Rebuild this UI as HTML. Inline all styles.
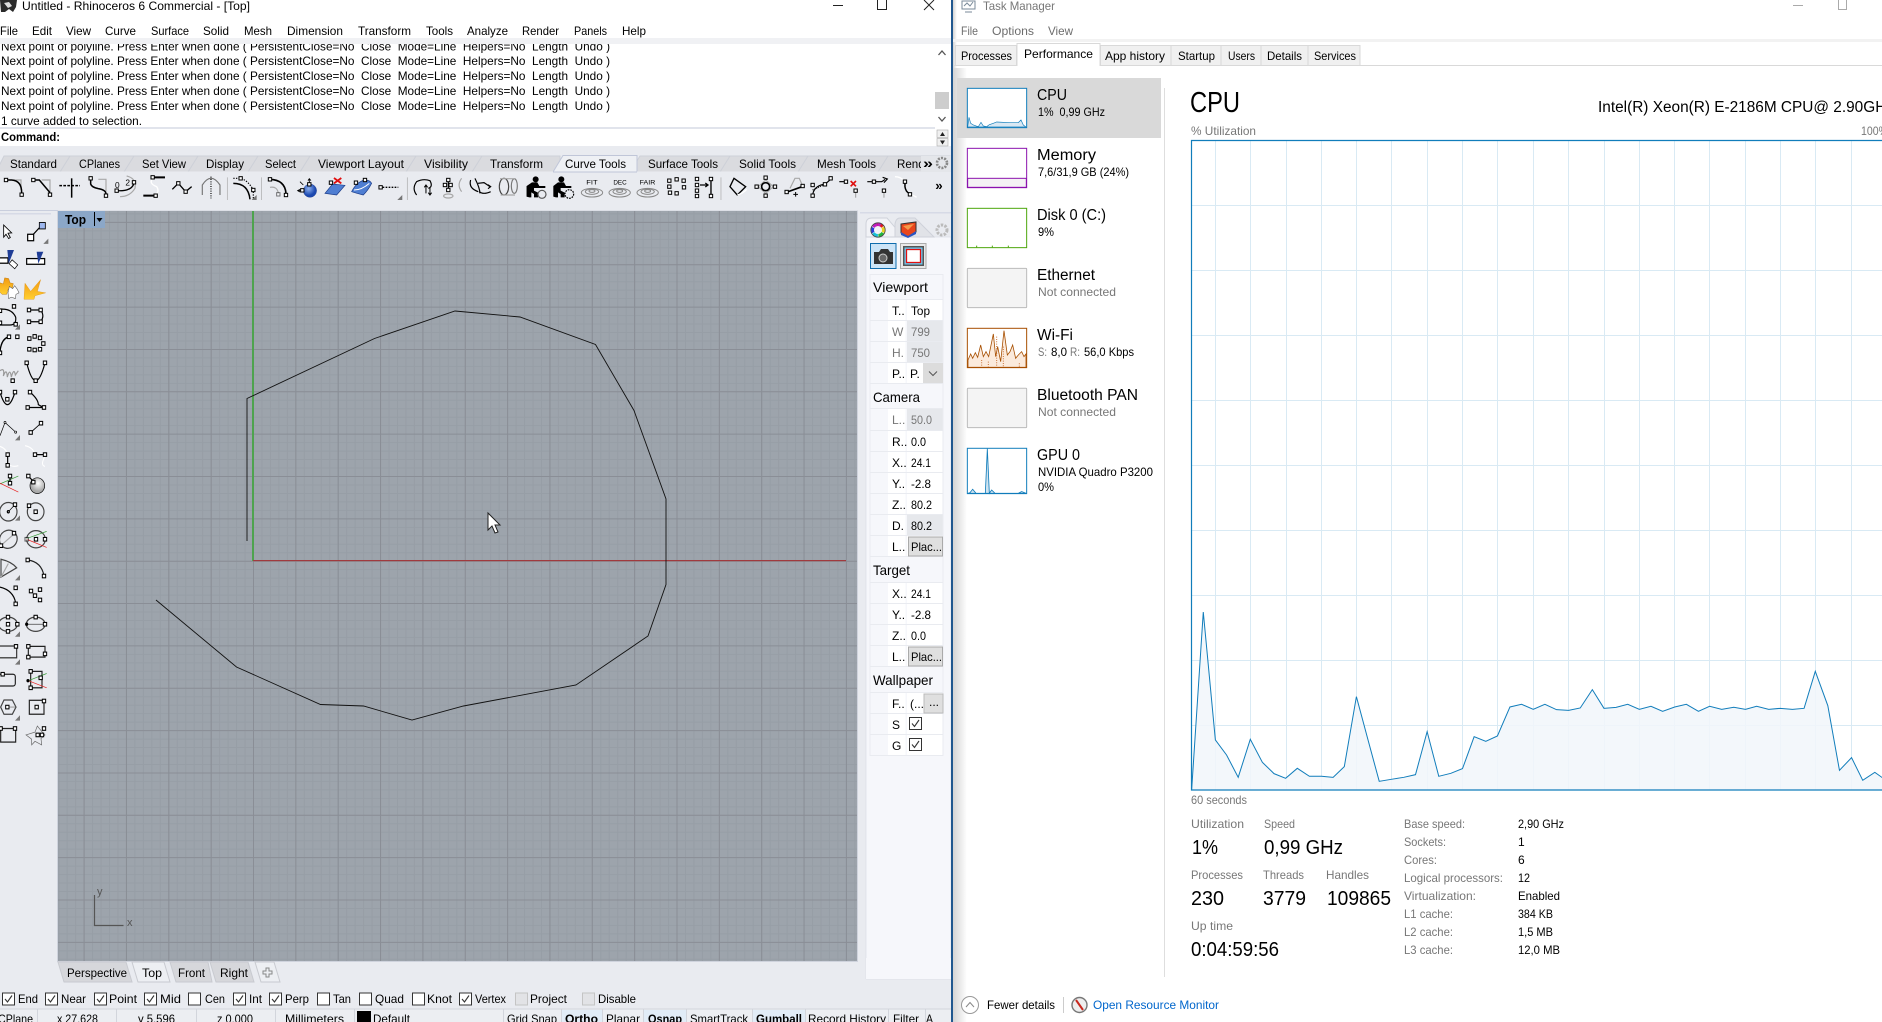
<!DOCTYPE html>
<html lang="en"><head><meta charset="utf-8"><title>Rhinoceros and Task Manager</title>
<style>
html,body{margin:0;padding:0;width:1882px;height:1022px;overflow:hidden;background:#fff}
svg{display:block}
text{font-family:"Liberation Sans",sans-serif;font-size:12px;fill:#000;white-space:pre}
.g{fill:#6d6d6d}.b{font-weight:bold}.l{fill:#777}
.ic{fill:none;stroke:#000;stroke-width:3.5}
.gr{stroke:#a8a8a8}
</style></head><body>
<svg width="1882" height="1022" viewBox="0 0 1882 1022" xmlns="http://www.w3.org/2000/svg">
<defs>
<rect id="h" x="-5" y="-5" width="10" height="10" fill="#fff" stroke="#000" stroke-width="3"/>
<path id="tri" d="M0 15L15 0V15Z" fill="#777" stroke="none"/>
<g id="c"><rect x=".5" y=".5" width="12" height="12" fill="#fff" stroke="#333"/><path d="M3 6.5L5.5 9.5L10 3" fill="none" stroke="#333" stroke-width="1.1"/></g>
<rect id="e" x=".5" y=".5" width="12" height="12" fill="#fff" stroke="#333"/>
<rect id="d" x=".5" y=".5" width="12" height="12" fill="#e2e3e6" stroke="#c4c4c4"/>
<radialGradient id="sph" cx=".4" cy=".35"><stop offset="0" stop-color="#8fb2f0"/><stop offset="1" stop-color="#1c49b0"/></radialGradient>
<radialGradient id="gs" cx=".55" cy=".35"><stop offset="0" stop-color="#fff"/><stop offset="1" stop-color="#aaa"/></radialGradient>
<linearGradient id="or" x1="0" y1="0" x2="0" y2="1"><stop offset="0" stop-color="#f29a12"/><stop offset="1" stop-color="#ffcf30"/></linearGradient>
<linearGradient id="sh" x1="0" x2="1"><stop offset="0" stop-color="#d4d4d4"/><stop offset="1" stop-color="#fff"/></linearGradient>
</defs>

<!-- RHINO WINDOW -->
<rect x="0" y="0" width="952" height="1022" fill="#e9ebf0"/>
<rect x="0" y="0" width="951" height="38" fill="#fff"/>
<path d="M0 0H17L16 7L13 12L9 9L5 12L1 12Z" fill="#2a2a2a"/><path d="M4 3L9 2L12 6L8 8Z" fill="#ddd"/>
<text x="22" y="10" textLength="228" lengthAdjust="spacingAndGlyphs">Untitled - Rhinoceros 6 Commercial - [Top]</text>
<path d="M833 5.5H843M877.5 -1H886.5V9.5H877.5ZM924 0L934 10M934 0L924 10" fill="none" stroke="#222"/>
<g>
<text x="0" y="35" textLength="18" lengthAdjust="spacingAndGlyphs">File</text>
<text x="32" y="35" textLength="20" lengthAdjust="spacingAndGlyphs">Edit</text>
<text x="66" y="35" textLength="25" lengthAdjust="spacingAndGlyphs">View</text>
<text x="105" y="35" textLength="31" lengthAdjust="spacingAndGlyphs">Curve</text>
<text x="151" y="35" textLength="38" lengthAdjust="spacingAndGlyphs">Surface</text>
<text x="203" y="35" textLength="26" lengthAdjust="spacingAndGlyphs">Solid</text>
<text x="244" y="35" textLength="28" lengthAdjust="spacingAndGlyphs">Mesh</text>
<text x="287" y="35" textLength="56" lengthAdjust="spacingAndGlyphs">Dimension</text>
<text x="358" y="35" textLength="53" lengthAdjust="spacingAndGlyphs">Transform</text>
<text x="426" y="35" textLength="27" lengthAdjust="spacingAndGlyphs">Tools</text>
<text x="467" y="35" textLength="41" lengthAdjust="spacingAndGlyphs">Analyze</text>
<text x="522" y="35" textLength="37" lengthAdjust="spacingAndGlyphs">Render</text>
<text x="574" y="35" textLength="33" lengthAdjust="spacingAndGlyphs">Panels</text>
<text x="622" y="35" textLength="24" lengthAdjust="spacingAndGlyphs">Help</text>
</g>
<!-- command history -->
<rect x="0" y="44" width="951" height="84" fill="#fff"/>
<text x="1" y="50.5" textLength="609" lengthAdjust="spacingAndGlyphs">Next point of polyline. Press Enter when done ( PersistentClose=No  Close  Mode=Line  Helpers=No  Length  Undo )</text>
<text x="1" y="65" textLength="609" lengthAdjust="spacingAndGlyphs">Next point of polyline. Press Enter when done ( PersistentClose=No  Close  Mode=Line  Helpers=No  Length  Undo )</text>
<text x="1" y="80" textLength="609" lengthAdjust="spacingAndGlyphs">Next point of polyline. Press Enter when done ( PersistentClose=No  Close  Mode=Line  Helpers=No  Length  Undo )</text>
<text x="1" y="95" textLength="609" lengthAdjust="spacingAndGlyphs">Next point of polyline. Press Enter when done ( PersistentClose=No  Close  Mode=Line  Helpers=No  Length  Undo )</text>
<text x="1" y="110" textLength="609" lengthAdjust="spacingAndGlyphs">Next point of polyline. Press Enter when done ( PersistentClose=No  Close  Mode=Line  Helpers=No  Length  Undo )</text>
<text x="1" y="125" textLength="141" lengthAdjust="spacingAndGlyphs">1 curve added to selection.</text>
<rect x="0" y="38" width="951" height="6" fill="#f0f1f4"/>
<rect x="935" y="44" width="15" height="84" fill="#fff"/>
<rect x="935" y="92" width="14" height="17" fill="#cdcdcd"/>
<path d="M938.5 55L942 51L945.5 55M938.5 117L942 121L945.5 117" fill="none" stroke="#555" stroke-width="1.3"/>
<rect x="0" y="128" width="951" height="18" fill="#fff"/>
<rect x="0" y="127.5" width="935" height="1" fill="#c3c8da"/>
<text x="1" y="141" class="b" textLength="59" lengthAdjust="spacingAndGlyphs">Command:</text>
<rect x="937" y="130" width="11" height="7.5" fill="#f0f0f0" stroke="#aaa" stroke-width=".6"/><rect x="937" y="138.5" width="11" height="7.5" fill="#f0f0f0" stroke="#aaa" stroke-width=".6"/>
<path d="M940 136L942.5 132L945 136ZM940 140.5L942.5 144.5L945 140.5Z" fill="#222"/>
<!-- toolbar tabs -->
<g fill="#dadbdf" stroke="#cdd0d8">
<polygon points="-4,172 4,156 72,156 72,172"/>
<polygon points="60,172 70,156 136,156 136,172"/>
<polygon points="124,172 134,156 200,156 200,172"/>
<polygon points="188,172 198,156 260,156 260,172"/>
<polygon points="248,172 258,156 313,156 313,172"/>
<polygon points="300,172 310,156 420,156 420,172"/>
<polygon points="406,172 416,156 482,156 482,172"/>
<polygon points="472,172 482,156 560,156 560,172"/>
<polygon points="630,172 640,156 732,156 732,172"/>
<polygon points="720,172 730,156 812,156 812,172"/>
<polygon points="798,172 808,156 892,156 892,172"/>
<polygon points="878,172 888,156 950,156 950,172"/>
<polygon points="553,172 563,155.5 637,155.5 637,172" fill="#eef0f4" stroke="#c0c6d8"/>
</g>
<rect x="0" y="171.5" width="553" height="1.5" fill="#e9ebf0"/><rect x="637" y="171.5" width="314" height="1.5" fill="#e9ebf0"/>
<g>
<text x="10" y="168" textLength="47" lengthAdjust="spacingAndGlyphs">Standard</text>
<text x="79" y="168" textLength="41" lengthAdjust="spacingAndGlyphs">CPlanes</text>
<text x="142" y="168" textLength="44" lengthAdjust="spacingAndGlyphs">Set View</text>
<text x="206" y="168" textLength="38" lengthAdjust="spacingAndGlyphs">Display</text>
<text x="265" y="168" textLength="31" lengthAdjust="spacingAndGlyphs">Select</text>
<text x="318" y="168" textLength="86" lengthAdjust="spacingAndGlyphs">Viewport Layout</text>
<text x="424" y="168" textLength="44" lengthAdjust="spacingAndGlyphs">Visibility</text>
<text x="490" y="168" textLength="53" lengthAdjust="spacingAndGlyphs">Transform</text>
<text x="565" y="168" textLength="61" lengthAdjust="spacingAndGlyphs">Curve Tools</text>
<text x="648" y="168" textLength="70" lengthAdjust="spacingAndGlyphs">Surface Tools</text>
<text x="739" y="168" textLength="57" lengthAdjust="spacingAndGlyphs">Solid Tools</text>
<text x="817" y="168" textLength="59" lengthAdjust="spacingAndGlyphs">Mesh Tools</text>
<text x="897" y="168" textLength="38" lengthAdjust="spacingAndGlyphs">Render</text>
</g>
<rect x="921" y="156" width="30" height="16" fill="#e4e6ea"/>
<text x="923" y="168" class="b" style="font-size:14px" textLength="10" lengthAdjust="spacingAndGlyphs">»</text>
<circle cx="942" cy="163" r="5" fill="none" stroke="#888" stroke-width="2.6" stroke-dasharray="2 1.2"/>

<!-- toolbar icons, first half -->
<g transform="translate(0,150) scale(.3333)" class="ic">
<path class="gr" d="M40 90H63V120"/>
<path d="M18 90H35Q65 92 65 128" stroke-width="4.5"/><use href="#h" x="18" y="90"/><use href="#h" x="65" y="134"/>
<path class="gr" d="M125 90H150V125"/>
<path d="M100 90H118L150 128" stroke-width="4.5"/><use href="#h" x="100" y="90"/><use href="#h" x="150" y="134"/>
<path d="M178 107H240" stroke-dasharray="8 4" stroke-width="4.5"/><path d="M215 85V143" stroke-width="4.5"/>
<path class="gr" d="M295 88H318V125"/>
<path d="M272 88V102Q275 112 295 116Q318 120 318 132" stroke-width="4.5"/><use href="#h" x="272" y="85"/><use href="#h" x="318" y="137"/>
<path class="gr" d="M380 78Q410 85 405 115Q390 140 360 140"/>
<path d="M350 122Q395 125 402 100" stroke-width="4"/><use href="#h" x="350" y="122"/><use href="#h" x="402" y="97"/>
<text x="345" y="114" style="font-size:25px" stroke="none">0</text><text x="376" y="106" style="font-size:25px" stroke="none">2</text>
<path d="M458 82H495M430 137H468" stroke-width="6"/><path d="M458 86Q445 100 470 110Q480 125 465 135" stroke="#fff" stroke-width="4"/><use href="#h" x="458" y="82"/><use href="#h" x="467" y="137"/>
<path d="M517 118L535 100L557 125L575 110" stroke-width="4"/><use href="#h" x="535" y="100"/><use href="#h" x="557" y="125"/>
<path d="M607 135V105Q633 65 660 105V135" stroke="#777"/><path d="M633 80V145" stroke-dasharray="3 4"/>
<path class="gr" d="M682 82V150M785 82V150M1222 82V150" stroke-width="2"/>
<path d="M700 85H722Q745 92 760 120V145" stroke-dasharray="4 4"/><path d="M700 100Q745 100 750 148" stroke-width="4.5"/><use href="#h" x="722" y="85"/><use href="#h" x="760" y="120"/><use href="#tri" x="755" y="135"/>
<path class="gr" d="M810 112Q832 108 835 130"/><use href="#h" x="835" y="133" opacity=".5"/>
<path d="M810 88Q855 90 858 130" stroke-width="5"/><use href="#h" x="810" y="88"/><use href="#h" x="858" y="135"/>
<circle cx="930" cy="122" r="20" fill="url(#sph)" stroke="#223a80" stroke-width="1"/><path d="M928 100V86M924 92L928 86L933 92M905 122H893M900 118L893 122L900 126M910 105L900 95" stroke-width="2.5"/><use href="#h" x="928" y="103"/><use href="#h" x="907" y="121"/>
<polygon points="975,130 998,102 1035,106 1010,135" fill="#4f7ed2" stroke="#1b3b88" stroke-width="2"/><use href="#h" x="993" y="98"/><path d="M1002 84L1024 100M1024 84L1002 100" stroke="#e01010" stroke-width="5.5"/>
<path d="M1055 125Q1070 95 1095 90Q1110 90 1115 100Q1105 120 1090 135Q1070 130 1055 125Z" fill="#4f7ed2" stroke="#1b3b88" stroke-width="2"/><path d="M1062 120Q1085 120 1108 100" stroke="#fff" stroke-width="3"/><use href="#h" x="1068" y="98"/><use href="#h" x="1095" y="90"/>
<use href="#h" x="1142" y="112"/><path d="M1148 112H1195" stroke-dasharray="5 4" stroke-width="4"/><use href="#tri" x="1192" y="135"/>
<path d="M1250 135Q1235 115 1250 95Q1270 85 1290 92Q1300 110 1285 115"/><path d="M1278 105V130M1273 112L1278 105L1283 112M1290 112V135M1285 128L1290 135L1295 128" stroke-width="3"/>
<path d="M1345 85V125"/><use href="#h" x="1345" y="90"/><use href="#h" x="1335" y="105"/><use href="#h" x="1352" y="105"/><use href="#h" x="1345" y="120"/><ellipse cx="1345" cy="138" rx="14" ry="6" class="gr"/><path class="gr" d="M1385 85Q1370 105 1385 125"/>
<path d="M1412 90Q1405 115 1435 125M1425 85Q1440 115 1440 130"/>
</g>
<!-- toolbar icons, second half -->
<g transform="translate(480,150) scale(.3333)" class="ic">
<path d="M-6 100L12 98L30 110M-2 125Q10 135 32 125"/><path d="M24 104L32 110L24 116"/>
<ellipse cx="72" cy="110" rx="14" ry="25" stroke="#444"/><ellipse cx="103" cy="108" rx="9" ry="22" stroke="#777"/><path class="gr" d="M60 86H105M62 135H105"/>
<g stroke="none" fill="#000"><circle cx="167" cy="88" r="9"/><path d="M140 140V108L156 97H172L178 108H196V114H162V122L174 128V142H162V132L154 127V142H148Z"/><rect x="140" y="108" width="8" height="32"/>
<circle cx="244" cy="88" r="9"/><path d="M220 140V108L234 97H252L258 108H274V114H242V122L254 128V142H242V132L234 127V142H228Z"/></g>
<circle cx="186" cy="133" r="12" stroke="#555"/><circle cx="268" cy="132" r="13" stroke-dasharray="5 3"/>
<g stroke="#888" stroke-width="3"><ellipse cx="336" cy="128" rx="32" ry="13"/><ellipse cx="336" cy="125" rx="20" ry="8"/><ellipse cx="336" cy="123" rx="9" ry="4"/>
<ellipse cx="419" cy="128" rx="32" ry="13"/><ellipse cx="419" cy="125" rx="20" ry="8"/><ellipse cx="419" cy="123" rx="9" ry="4"/>
<ellipse cx="503" cy="128" rx="32" ry="13"/><ellipse cx="503" cy="125" rx="20" ry="8"/><ellipse cx="503" cy="123" rx="9" ry="4"/></g>
<text x="319" y="103" stroke="none" style="font-size:20px" textLength="34" lengthAdjust="spacingAndGlyphs">FIT</text><text x="400" y="103" stroke="none" style="font-size:20px" textLength="40" lengthAdjust="spacingAndGlyphs">DEC</text><text x="479" y="103" stroke="none" style="font-size:20px" textLength="47" lengthAdjust="spacingAndGlyphs">FAIR</text>
<use href="#h" x="568" y="92"/><use href="#h" x="590" y="88"/><use href="#h" x="611" y="92"/><use href="#h" x="612" y="112"/><use href="#h" x="590" y="130"/><use href="#h" x="570" y="128"/><use href="#h" x="568" y="110"/>
<use href="#h" x="651" y="87"/><use href="#h" x="651" y="105"/><use href="#h" x="651" y="122"/><use href="#h" x="651" y="138"/><path d="M660 105H682M676 99L684 105L676 111M693 87V138" stroke-width="4"/><use href="#h" x="693" y="87"/><use href="#h" x="693" y="138"/>
<path class="gr" d="M723 82V150" stroke-width="2"/>
<path d="M762 85L797 110L772 135L750 110Z" stroke-width="4"/><path d="M772 135Q790 130 800 118" stroke="#fff" stroke-width="4"/>
<path class="gr" d="M857 90L880 110L857 130L835 110Z"/><circle cx="857" cy="110" r="12" stroke-width="5"/><use href="#h" x="857" y="83"/><use href="#h" x="830" y="110"/><use href="#h" x="885" y="110"/><use href="#h" x="857" y="137"/>
<path class="gr" d="M930 115L945 85H958L968 108"/><path d="M922 126L966 110" stroke-width="5"/><use href="#h" x="920" y="126"/><use href="#h" x="968" y="108"/><path d="M947 126V140M940 133H954" stroke-width="3"/>
<path d="M998 137Q1000 110 1030 103"/><path d="M998 120L1035 103" stroke-dasharray="3 3"/><path d="M1035 103L1052 88"/><use href="#h" x="998" y="105"/><use href="#h" x="998" y="137"/><use href="#h" x="1035" y="103"/><use href="#h" x="1052" y="85"/>
<path d="M1078 95H1092"/><use href="#h" x="1098" y="95"/><path d="M1112 93L1128 109M1128 93L1112 109" stroke="#e01010" stroke-width="5"/><path class="gr" d="M1127 128V143"/><use href="#h" x="1127" y="122"/>
<path d="M1162 95H1176M1188 95H1205Q1212 92 1215 88M1208 82L1222 87L1212 98"/><use href="#h" x="1182" y="95"/><path class="gr" d="M1212 128V143"/><use href="#h" x="1212" y="122"/>
<path d="M1245 80Q1262 80 1272 92M1296 135Q1305 138 1310 142" stroke="#fff" stroke-width="4"/><path d="M1275 98V110Q1277 125 1288 130" stroke-width="4.5"/><use href="#h" x="1275" y="95"/><use href="#h" x="1290" y="133"/>
<text x="1366" y="120" class="b" stroke="none" style="font-size:40px">»</text>
</g>

<!-- left tool column -->
<rect x="0" y="210" width="58" height="1" fill="#c9cedd"/>
<rect x="0" y="213" width="51" height="1.5" fill="#d6dae6"/>
<g transform="translate(0,210) scale(.3333,.3571)" class="ic">
<path d="M11 42V76L18 68L26 80L31 77L24 65L35 64Z" fill="#fff" stroke-width="2.5"/>
<rect x="83" y="68" width="18" height="18" fill="#fff"/><rect x="118" y="35" width="18" height="18" fill="#9db7ee" stroke-width="2.5"/><path d="M100 68L118 50"/><use href="#tri" x="130" y="80"/>
<rect x="-6" y="134" width="30" height="15" fill="#fff"/><polygon points="22,112 42,112 26,150" fill="#1f3d96" stroke="none"/><rect x="-8" y="-7" width="22" height="14" transform="translate(38,150) rotate(40)" fill="#fff" stroke-width="2"/>
<rect x="80" y="136" width="54" height="16" fill="#fff"/><polygon points="110,117 130,117 115,150" fill="#1f3d96" stroke="none"/>
<path d="M-4 226L0 204L10 207L14 190L26 192L30 204L40 206L36 222L24 222L20 236L6 236Z" fill="url(#or)" stroke="#b66f00" stroke-width="1.2"/><path d="M24 232L28 214L38 220L44 212L52 222L57 232L48 236L46 248L34 244L26 248Z" fill="#fff" stroke="#555" stroke-width="1.6"/>
<path d="M72 250L75 205L92 228L122 195L112 228L137 232L105 240L102 250Z" fill="url(#or)" stroke="#e08a00" stroke-width="1"/>
<path d="M0 278Q35 275 47 300Q50 322 30 322H0"/><use href="#h" x="42" y="270"/><use href="#h" x="47" y="320"/><use href="#tri" x="45" y="320"/><use href="#h" x="0" y="282"/><use href="#h" x="0" y="316"/>
<path d="M87 280H122Q135 296 122 313H87"/><use href="#h" x="87" y="280"/><use href="#h" x="122" y="280"/><use href="#h" x="87" y="313"/><use href="#h" x="122" y="313"/>
<path d="M0 395Q5 357 30 355" stroke-width="4"/><use href="#h" x="27" y="355"/><use href="#h" x="52" y="355"/><use href="#h" x="0" y="400"/>
<use href="#h" x="88" y="360"/><use href="#h" x="104" y="354"/><use href="#h" x="120" y="358"/><use href="#h" x="130" y="374"/><use href="#h" x="120" y="390"/><use href="#h" x="104" y="392"/><use href="#h" x="88" y="390"/>
<path d="M0 450Q15 440 10 465Q20 440 22 468Q30 440 34 468Q42 440 46 462L55 450" stroke="#999"/><use href="#h" x="38" y="478"/>
<path d="M80 428Q107 528 135 428"/><use href="#h" x="80" y="428"/><use href="#h" x="135" y="428"/><use href="#h" x="107" y="478"/>
<path d="M0 510Q22 580 45 510"/><use href="#h" x="0" y="510"/><use href="#h" x="45" y="510"/><use href="#h" x="22" y="530"/>
<path d="M90 510Q115 530 115 545L130 553M83 553H132"/><use href="#h" x="90" y="510"/><use href="#h" x="132" y="553"/><use href="#h" x="83" y="553"/>
<path d="M0 632L15 595L47 622" stroke-width="2"/><circle cx="15" cy="595" r="3" fill="#fff" stroke-width="2"/><circle cx="47" cy="622" r="3" fill="#fff" stroke-width="2"/><use href="#tri" x="45" y="630"/>
<path d="M92 623L123 597" stroke-width="2.5"/><use href="#h" x="92" y="623"/><use href="#h" x="123" y="597"/>
<path d="M0 662Q20 668 25 690M30 715Q40 720 55 716" stroke="#fff" stroke-width="3"/><path d="M23 685V715"/><use href="#h" x="23" y="685"/><use href="#h" x="23" y="715"/>
<path d="M75 660Q100 665 105 685M135 690Q120 715 135 718" stroke="#fff" stroke-width="3"/><path d="M105 685H135"/><use href="#h" x="105" y="685"/><use href="#h" x="135" y="685"/>
<path d="M0 767L55 745" stroke="#3a9c3a" stroke-width="2"/><path d="M0 765L55 790" stroke="#e82020" stroke-width="2"/><path d="M30 745V765"/><use href="#h" x="30" y="745"/><use href="#h" x="30" y="765"/>
<circle cx="112" cy="772" r="22" fill="url(#gs)" stroke-width="2"/><path d="M85 745L100 760"/><use href="#h" x="85" y="745"/><use href="#h" x="100" y="762"/>
<circle cx="25" cy="845" r="26" stroke="#444"/><path d="M25 845L45 825" stroke-width="2"/><circle cx="25" cy="845" r="3" fill="#fff"/><use href="#h" x="45" y="825"/><use href="#tri" x="45" y="855"/>
<circle cx="107" cy="845" r="25" stroke="#444"/><use href="#h" x="87" y="828"/><use href="#h" x="107" y="845"/>
<ellipse cx="25" cy="922" rx="27" ry="25" stroke="#444" transform="rotate(-30 25 922)"/><path d="M2 940L45 905" class="gr"/><use href="#h" x="42" y="905"/><use href="#h" x="3" y="940"/>
<ellipse cx="108" cy="922" rx="28" ry="24" stroke="#444"/><path d="M80 920L140 900" stroke="#3a9c3a" stroke-width="2"/><path d="M80 922L140 945" stroke="#e82020" stroke-width="2"/><use href="#h" x="108" y="922"/><use href="#h" x="135" y="922"/><use href="#h" x="80" y="922" opacity=".6"/>
<path d="M3 978V1028L50 1002Q35 985 3 978Z" stroke="#444"/><path d="M3 1028L25 990" class="gr"/><use href="#tri" x="45" y="1022"/>
<path d="M83 980Q125 985 132 1025" stroke="#222"/><use href="#h" x="83" y="980"/><use href="#h" x="132" y="1025"/>
<path d="M0 1056Q40 1065 47 1100"/><use href="#h" x="47" y="1058"/><use href="#h" x="47" y="1103"/>
<use href="#h" x="93" y="1067"/><use href="#h" x="120" y="1063"/><use href="#h" x="105" y="1080"/><use href="#h" x="120" y="1092"/>
<ellipse cx="24" cy="1160" rx="28" ry="20" stroke="#444"/><use href="#h" x="24" y="1140"/><use href="#h" x="24" y="1180"/><use href="#h" x="52" y="1160"/><use href="#h" x="24" y="1160"/><use href="#tri" x="45" y="1180"/>
<ellipse cx="107" cy="1160" rx="28" ry="20" stroke="#444"/><path d="M80 1160H135" stroke="#444" stroke-width="2"/><use href="#h" x="107" y="1140"/><use href="#h" x="135" y="1160"/><circle cx="80" cy="1160" r="3" fill="#000"/>
<rect x="-6" y="1221" width="56" height="33" stroke="#333"/><use href="#h" x="48" y="1222"/><use href="#tri" x="45" y="1258"/>
<rect x="85" y="1222" width="50" height="30" stroke="#222"/><use href="#h" x="85" y="1222"/><use href="#h" x="135" y="1243"/><use href="#h" x="85" y="1252"/>
<rect x="-8" y="1300" width="54" height="33" rx="7" stroke="#222"/><use href="#h" x="8" y="1300"/>
<rect x="92" y="1292" width="34" height="46" stroke="#222"/><path d="M85 1318L140 1298" stroke="#3a9c3a" stroke-width="2"/><path d="M85 1318L140 1338" stroke="#e82020" stroke-width="2"/><use href="#h" x="92" y="1292"/><use href="#h" x="122" y="1310"/><use href="#h" x="92" y="1338"/><circle cx="84" cy="1318" r="3" fill="#000"/>
<path d="M2 1392L12 1372H37L48 1392L37 1412H12Z" stroke="#444"/><path d="M22 1392H45" class="gr"/><use href="#h" x="22" y="1392"/><use href="#tri" x="45" y="1415"/>
<rect x="88" y="1373" width="44" height="39" stroke="#222"/><use href="#h" x="110" y="1392"/><use href="#h" x="132" y="1375"/>
<rect x="2" y="1452" width="45" height="38" stroke="#222"/><use href="#h" x="2" y="1452"/><use href="#h" x="45" y="1452"/>
<path d="M78 1470L105 1462L112 1445L125 1460L135 1470L123 1480L125 1498L105 1488L95 1498L95 1482Z" stroke="#666" stroke-width="2"/><use href="#h" x="132" y="1452"/><use href="#h" x="113" y="1470"/><use href="#h" x="126" y="1470"/>
</g>

<!-- VIEWPORT -->
<rect x="57" y="210.5" width="801" height="751.5" fill="#cfd3dd"/>
<svg x="58" y="211" width="799" height="750" viewBox="58 211 799 750">
<rect x="58" y="211" width="799" height="750" fill="#9da4ac"/>
<line x1="49.72" x2="860" y1="586" y2="586" stroke="#979ea6" stroke-width="800" stroke-dasharray="1 7.47"/>
<line x1="457" x2="457" y1="204.96" y2="965" stroke="#979ea6" stroke-width="820" stroke-dasharray="1 7.47"/>
<line x1="41.25" x2="860" y1="586" y2="586" stroke="#8a8e96" stroke-width="800" stroke-dasharray="1 41.35"/>
<line x1="457" x2="457" y1="179.55" y2="965" stroke="#8a8e96" stroke-width="820" stroke-dasharray="1 41.35"/>
<rect x="58" y="211" width="47" height="17" fill="#8ba7c8"/>
<text x="65" y="224" class="b" style="font-size:12.5px" textLength="21" lengthAdjust="spacingAndGlyphs">Top</text>
<rect x="94" y="212" width="1" height="14" fill="#000"/><path d="M96.5 218H102.5L99.5 222Z" fill="#000"/>
<rect x="252" y="211" width="2" height="350" fill="#4ea34e"/>
<rect x="253" y="560" width="593" height="1.2" fill="#a03a3e"/>
<polyline fill="none" stroke="#111" stroke-width=".9" points="247,541 247,398.5 374.5,338.5 455,311 520,317 595.5,344.5 634,410.5 666,499 666,584.5 648,636 576,685 463.5,706 412,720 363.5,706 320.5,704.5 236.5,667 156,600"/>
<path d="M94.5 895V925.5H123.5" fill="none" stroke="#555" stroke-width="1.2"/>
<text x="97" y="895" style="font-size:11px;fill:#555">y</text><text x="127" y="926" style="font-size:11px;fill:#555">x</text>
<path d="M488 513V530L492 526L495 533L498 532L495 525L500 525Z" fill="#fff" stroke="#222" stroke-width="1"/>
</svg>

<!-- viewport tabs -->
<g fill="#d6d7db" stroke="#c8cad0">
<path d="M58 962H126L132 982H64Z"/><path d="M170 962H208L212 982H176Z"/><path d="M210 962H248L254 982H216Z"/>
<path d="M132 962H164L170 982H138Z" fill="#edeff3"/><path d="M255 962H274L280 982H261Z" fill="#edeff3"/>
</g>
<text x="67" y="977" textLength="60" lengthAdjust="spacingAndGlyphs">Perspective</text>
<text x="142" y="977" textLength="20" lengthAdjust="spacingAndGlyphs">Top</text>
<text x="178" y="977" textLength="27" lengthAdjust="spacingAndGlyphs">Front</text>
<text x="220" y="977" textLength="28" lengthAdjust="spacingAndGlyphs">Right</text>
<path d="M266 968h3v3h3v3h-3v3h-3v-3h-3v-3h3Z" fill="none" stroke="#888"/>

<!-- osnaps -->
<use href="#c" x="2" y="992.5"/><text x="18" y="1003" textLength="20" lengthAdjust="spacingAndGlyphs">End</text>
<use href="#c" x="45" y="992.5"/><text x="61" y="1003" textLength="25" lengthAdjust="spacingAndGlyphs">Near</text>
<use href="#c" x="94" y="992.5"/><text x="109" y="1003" textLength="28" lengthAdjust="spacingAndGlyphs">Point</text>
<use href="#c" x="144" y="992.5"/><text x="160" y="1003" textLength="21" lengthAdjust="spacingAndGlyphs">Mid</text>
<use href="#e" x="188" y="992.5"/><text x="205" y="1003" textLength="20" lengthAdjust="spacingAndGlyphs">Cen</text>
<use href="#c" x="233" y="992.5"/><text x="249" y="1003" textLength="13" lengthAdjust="spacingAndGlyphs">Int</text>
<use href="#c" x="269" y="992.5"/><text x="285" y="1003" textLength="24" lengthAdjust="spacingAndGlyphs">Perp</text>
<use href="#e" x="317" y="992.5"/><text x="333" y="1003" textLength="18" lengthAdjust="spacingAndGlyphs">Tan</text>
<use href="#e" x="359" y="992.5"/><text x="375" y="1003" textLength="29" lengthAdjust="spacingAndGlyphs">Quad</text>
<use href="#e" x="412" y="992.5"/><text x="427" y="1003" textLength="25" lengthAdjust="spacingAndGlyphs">Knot</text>
<use href="#c" x="459" y="992.5"/><text x="475" y="1003" textLength="31" lengthAdjust="spacingAndGlyphs">Vertex</text>
<use href="#d" x="515" y="992.5"/><text x="530" y="1003" textLength="37" lengthAdjust="spacingAndGlyphs">Project</text>
<use href="#d" x="582" y="992.5"/><text x="598" y="1003" textLength="38" lengthAdjust="spacingAndGlyphs">Disable</text>

<!-- status bar -->
<rect x="0" y="1009" width="951" height="13" fill="#eceef2"/><rect x="0" y="1008.5" width="951" height="1" fill="#d2d5dc"/>
<rect x="562" y="1010" width="40" height="12" fill="#e1ecf7"/><rect x="644" y="1010" width="42" height="12" fill="#e1ecf7"/><rect x="752" y="1010" width="53" height="12" fill="#e1ecf7"/>
<path d="M37.5 1009V1022M116.5 1009V1022M196.5 1009V1022M275.5 1009V1022M354.5 1009V1022M503.5 1009V1022M561.5 1009V1022M602.5 1009V1022M643.5 1009V1022M686.5 1009V1022M752.5 1009V1022M805.5 1009V1022M888.5 1009V1022M925.5 1009V1022" stroke="#d2d5dc"/>
<g>
<text x="-2" y="1023" textLength="35" lengthAdjust="spacingAndGlyphs">CPlane</text>
<text x="57" y="1023" textLength="41" lengthAdjust="spacingAndGlyphs">x 27.628</text>
<text x="138" y="1023" textLength="37" lengthAdjust="spacingAndGlyphs">y 5.596</text>
<text x="217" y="1023" textLength="36" lengthAdjust="spacingAndGlyphs">z 0.000</text>
<text x="285" y="1023" textLength="59" lengthAdjust="spacingAndGlyphs">Millimeters</text>
<rect x="357" y="1011" width="14" height="11" fill="#000"/>
<text x="373" y="1023" textLength="37" lengthAdjust="spacingAndGlyphs">Default</text>
<text x="507" y="1023" textLength="50" lengthAdjust="spacingAndGlyphs">Grid Snap</text>
<text x="565" y="1023" class="b" textLength="33" lengthAdjust="spacingAndGlyphs">Ortho</text>
<text x="606" y="1023" textLength="34" lengthAdjust="spacingAndGlyphs">Planar</text>
<text x="648" y="1023" class="b" textLength="34" lengthAdjust="spacingAndGlyphs">Osnap</text>
<text x="690" y="1023" textLength="58" lengthAdjust="spacingAndGlyphs">SmartTrack</text>
<text x="756" y="1023" class="b" textLength="46" lengthAdjust="spacingAndGlyphs">Gumball</text>
<text x="808" y="1023" textLength="78" lengthAdjust="spacingAndGlyphs">Record History</text>
<text x="893" y="1023" textLength="26" lengthAdjust="spacingAndGlyphs">Filter</text>
<text x="926" y="1023" textLength="7" lengthAdjust="spacingAndGlyphs">A</text>
</g>

<!-- right panel -->
<rect x="866" y="237" width="85" height="742" fill="#f6f7fb" stroke="#d8dbe4" stroke-width=".6"/>
<rect x="860" y="212" width="91" height="1.5" fill="#d6dae6"/>
<path d="M866 237V224Q866 218 872 218H887L899 232L899 237Z" fill="#f2f3f7" stroke="#cfd2da"/>
<path d="M895 237V224Q896 218 900 218H915L934 237Z" fill="#e1e3e8" stroke="#cfd2da"/>
<g fill="none" stroke-width="3" stroke-dasharray="5.24 26.2" transform="rotate(-90 878 230)">
<circle cx="878" cy="230" r="5.5" stroke="#e01b1b"/><circle cx="878" cy="230" r="5.5" stroke="#e8d020" stroke-dashoffset="-5.76"/><circle cx="878" cy="230" r="5.5" stroke="#22b63c" stroke-dashoffset="-11.5"/><circle cx="878" cy="230" r="5.5" stroke="#18c0d8" stroke-dashoffset="-17.3"/><circle cx="878" cy="230" r="5.5" stroke="#2a40d8" stroke-dashoffset="-23"/><circle cx="878" cy="230" r="5.5" stroke="#c01cc0" stroke-dashoffset="-28.8"/></g>
<circle cx="878" cy="230" r="7.2" fill="none" stroke="#444" stroke-width=".8"/>
<path d="M901 224L908 223L916 222V232L908 237L901 233Z" fill="#e8461c" stroke="#333"/><path d="M901 232L908 236L916 231V234L908 238L901 235Z" fill="#2a55c0"/><path d="M903 226L914 224L908 230Z" fill="#f59a4a"/>
<circle cx="942" cy="230" r="5" fill="none" stroke="#bbb" stroke-width="3" stroke-dasharray="2.4 1.3"/>
<rect x="870.5" y="243.5" width="25.5" height="25" fill="#cce4f7" stroke="#0f6cad"/>
<path d="M874 252H879L881 249H888L890 252H893V264H874Z" fill="#333"/><circle cx="883" cy="258" r="4" fill="#666" stroke="#ccc"/>
<rect x="900.5" y="243.5" width="25.5" height="25" fill="#e8e8e8" stroke="#aaa"/>
<rect x="903" y="246" width="21" height="20" fill="#555"/><rect x="904.5" y="247.5" width="18" height="17" fill="#6ec7ee"/><rect x="906.5" y="249.5" width="14" height="13" fill="#fff" stroke="#e01010" stroke-width="1.3"/>

<!-- panel table -->
<g fill="#fff">
<rect x="888" y="300" width="17.5" height="20"/><rect x="907" y="300" width="36" height="20"/>
<rect x="888" y="321" width="17.5" height="20" /><rect x="888" y="342" width="17.5" height="20"/><rect x="888" y="363" width="17.5" height="20"/><rect x="907" y="363" width="16" height="20"/>
<rect x="888" y="409" width="17.5" height="21"/><rect x="888" y="431" width="17.5" height="20"/><rect x="907" y="431" width="36" height="20"/><rect x="888" y="452" width="17.5" height="20"/><rect x="907" y="452" width="36" height="20"/><rect x="888" y="473" width="17.5" height="20"/><rect x="907" y="473" width="36" height="20"/><rect x="888" y="494" width="17.5" height="20"/><rect x="907" y="494" width="36" height="20"/><rect x="888" y="515" width="17.5" height="20"/><rect x="888" y="536" width="17.5" height="20"/><rect x="907" y="536" width="36" height="20"/>
<rect x="888" y="583" width="17.5" height="20"/><rect x="907" y="583" width="36" height="20"/><rect x="888" y="604" width="17.5" height="20"/><rect x="907" y="604" width="36" height="20"/><rect x="888" y="625" width="17.5" height="20"/><rect x="907" y="625" width="36" height="20"/><rect x="888" y="646" width="17.5" height="20"/><rect x="907" y="646" width="36" height="20"/>
<rect x="888" y="693" width="17.5" height="20"/><rect x="907" y="693" width="36" height="20"/><rect x="888" y="714" width="17.5" height="20"/><rect x="907" y="714" width="36" height="20"/><rect x="888" y="735" width="17.5" height="20"/><rect x="907" y="735" width="36" height="20"/>
</g>
<g fill="#e6e8ec"><rect x="907" y="321" width="36" height="20"/><rect x="907" y="342" width="36" height="20"/><rect x="907" y="409" width="36" height="21"/><rect x="907" y="515" width="36" height="20"/></g>
<path d="M870 274.5H943V755.5H870ZM870 299.5H943M870 320.5H943M870 341.5H943M870 362.5H943M870 383.5H943M870 408.5H943M870 430.5H943M870 451.5H943M870 472.5H943M870 493.5H943M870 514.5H943M870 535.5H943M870 556.5H943M870 582.5H943M870 603.5H943M870 624.5H943M870 645.5H943M870 666.5H943M870 692.5H943M870 713.5H943M870 734.5H943" fill="none" stroke="#e9ebf0"/>
<rect x="923" y="363" width="20" height="20" fill="#dcdcdc"/><path d="M929 371.5L933 375.5L937 371.5" fill="none" stroke="#555"/>
<rect x="908.5" y="537" width="34" height="19" fill="#dfdfdf" stroke="#aaa"/><rect x="908.5" y="647" width="34" height="19" fill="#dfdfdf" stroke="#aaa"/><rect x="924" y="694" width="19" height="19" fill="#dfdfdf" stroke="#bbb"/>
<g style="font-size:14px">
<text x="873" y="292" style="font-size:14px" textLength="55" lengthAdjust="spacingAndGlyphs">Viewport</text>
<text x="873" y="402" style="font-size:14px" textLength="47" lengthAdjust="spacingAndGlyphs">Camera</text>
<text x="873" y="575" style="font-size:14px" textLength="37" lengthAdjust="spacingAndGlyphs">Target</text>
<text x="873" y="685" style="font-size:14px" textLength="60" lengthAdjust="spacingAndGlyphs">Wallpaper</text>
</g>
<g>
<text x="892" y="315">T..</text><text x="911" y="315" textLength="19" lengthAdjust="spacingAndGlyphs">Top</text>
<text x="892" y="336" class="l">W</text><text x="911" y="336" class="l" textLength="19" lengthAdjust="spacingAndGlyphs">799</text>
<text x="892" y="357" class="l">H.</text><text x="911" y="357" class="l" textLength="19" lengthAdjust="spacingAndGlyphs">750</text>
<text x="892" y="378">P..</text><text x="910" y="378">P.</text>
<text x="892" y="424" class="l">L..</text><text x="911" y="424" class="l" textLength="21" lengthAdjust="spacingAndGlyphs">50.0</text>
<text x="892" y="446">R..</text><text x="911" y="446" textLength="15" lengthAdjust="spacingAndGlyphs">0.0</text>
<text x="892" y="467">X..</text><text x="911" y="467" textLength="20" lengthAdjust="spacingAndGlyphs">24.1</text>
<text x="892" y="488">Y..</text><text x="911" y="488" textLength="20" lengthAdjust="spacingAndGlyphs">-2.8</text>
<text x="892" y="509">Z..</text><text x="911" y="509" textLength="21" lengthAdjust="spacingAndGlyphs">80.2</text>
<text x="892" y="530">D.</text><text x="911" y="530" textLength="21" lengthAdjust="spacingAndGlyphs">80.2</text>
<text x="892" y="551">L..</text><text x="911" y="551" textLength="31" lengthAdjust="spacingAndGlyphs">Plac...</text>
<text x="892" y="598">X..</text><text x="911" y="598" textLength="20" lengthAdjust="spacingAndGlyphs">24.1</text>
<text x="892" y="619">Y..</text><text x="911" y="619" textLength="20" lengthAdjust="spacingAndGlyphs">-2.8</text>
<text x="892" y="640">Z..</text><text x="911" y="640" textLength="15" lengthAdjust="spacingAndGlyphs">0.0</text>
<text x="892" y="661">L..</text><text x="911" y="661" textLength="31" lengthAdjust="spacingAndGlyphs">Plac...</text>
<text x="892" y="708">F..</text><text x="910" y="708">(...</text><text x="929" y="706">...</text>
<text x="892" y="729">S</text><use href="#c" x="909" y="717"/>
<text x="892" y="750">G</text><use href="#c" x="909" y="738"/>
</g>
<rect x="866" y="958" width="85" height="21" fill="#f6f7fb"/>
<rect x="951" y="0" width="2" height="1022" fill="#21588f"/>

<!-- TASK MANAGER -->
<rect x="953" y="0" width="929" height="1022" fill="#fff"/>
<rect x="953" y="68" width="14" height="954" fill="url(#sh)"/>
<rect x="953" y="0" width="4" height="68" fill="url(#sh)"/>
<path d="M962 1H975V9H962ZM964 6L967 3L970 6L973 2M965 12H972" fill="none" stroke="#7a8a99"/>
<text x="983" y="10" class="l" fill="#888" textLength="72" lengthAdjust="spacingAndGlyphs">Task Manager</text>
<path d="M1793 5.5H1803M1838.5 -1H1846.5V9.5H1838.5Z" fill="none" stroke="#aaa"/>
<text x="961" y="35" class="g" textLength="17" lengthAdjust="spacingAndGlyphs">File</text>
<text x="992" y="35" class="g" textLength="42" lengthAdjust="spacingAndGlyphs">Options</text>
<text x="1048" y="35" class="g" textLength="25" lengthAdjust="spacingAndGlyphs">View</text>
<rect x="953" y="39" width="929" height="3" fill="#f2f2f2"/>
<rect x="953" y="65" width="929" height="1" fill="#d9d9d9"/>
<g fill="#f0f0f0" stroke="#d9d9d9">
<rect x="955.5" y="45.5" width="61" height="20"/><rect x="1100.5" y="45.5" width="70.5" height="20"/><rect x="1171" y="45.5" width="50" height="20"/><rect x="1221" y="45.5" width="40" height="20"/><rect x="1261" y="45.5" width="47" height="20"/><rect x="1308" y="45.5" width="52" height="20"/>
</g>
<path d="M1017 66V43.5H1100V66" fill="#fff" stroke="#d9d9d9"/>
<text x="961" y="60" textLength="51" lengthAdjust="spacingAndGlyphs">Processes</text>
<text x="1024" y="58" textLength="69" lengthAdjust="spacingAndGlyphs">Performance</text>
<text x="1105" y="60" textLength="60" lengthAdjust="spacingAndGlyphs">App history</text>
<text x="1178" y="60" textLength="37" lengthAdjust="spacingAndGlyphs">Startup</text>
<text x="1228" y="60" textLength="27" lengthAdjust="spacingAndGlyphs">Users</text>
<text x="1267" y="60" textLength="35" lengthAdjust="spacingAndGlyphs">Details</text>
<text x="1314" y="60" textLength="42" lengthAdjust="spacingAndGlyphs">Services</text>

<!-- list -->
<rect x="957" y="78" width="204" height="60" fill="#d9d9d9"/>
<rect x="1164" y="88" width="1" height="889" fill="#dedede"/>
<g transform="translate(960,80) scale(.3333)" fill="#fff" stroke-width="3">
<rect x="22" y="25" width="178" height="118" stroke="#117dbb"/>
<path d="M23 141L27 112L32 130L40 135L48 138L55 140L63 127L70 138L80 140L88 134L100 130L110 126L150 128L175 128L183 120L190 135L198 141Z" fill="#d9e8f3" stroke="#117dbb" stroke-width="2"/>
<rect x="22" y="205" width="178" height="118" stroke="#8b12ae"/><rect x="23" y="295" width="176" height="27" fill="#f4f2f4" stroke="#8b12ae"/>
<rect x="22" y="385" width="178" height="118" stroke="#4da60c"/><path d="M50 502V497M97 502V497M145 502V497" stroke="#4da60c"/>
<rect x="22" y="565" width="178" height="118" rx="2" fill="#f4f4f4" stroke="#bbb"/>
<rect x="22" y="745" width="178" height="118" stroke="#a74f01"/>
<path d="M24 862V840L32 822L38 835L46 818L53 832L62 795L70 830L78 815L86 830L100 762L107 830L113 800L122 845L132 752L142 825L150 815L158 795L167 835L175 825L185 815L192 830L198 822V862Z" fill="#fbeadc" stroke="#a74f01" stroke-width="2.4"/>
<path d="M65 840V860M85 845V860M110 770V860M130 800V860M178 850V860" stroke="#c9743a" stroke-width="3" stroke-dasharray="3 4"/>
<rect x="22" y="925" width="178" height="118" rx="2" fill="#f4f4f4" stroke="#bbb"/>
<rect x="22" y="1105" width="178" height="136" stroke="#117dbb"/>
<path d="M24 1240L30 1238L38 1228L48 1240H76L82 1106L88 1240L95 1230L105 1240H175L185 1235L198 1240Z" fill="#cfe3f0" stroke="#117dbb" stroke-width="2.5"/>
</g>
<g>
<text x="1037" y="100" style="font-size:15.5px" textLength="30" lengthAdjust="spacingAndGlyphs">CPU</text>
<text x="1038" y="116" textLength="67" lengthAdjust="spacingAndGlyphs">1%  0,99 GHz</text>
<text x="1037" y="160" style="font-size:15.5px" textLength="59" lengthAdjust="spacingAndGlyphs">Memory</text>
<text x="1038" y="176" textLength="91" lengthAdjust="spacingAndGlyphs">7,6/31,9 GB (24%)</text>
<text x="1037" y="220" style="font-size:15.5px" textLength="69" lengthAdjust="spacingAndGlyphs">Disk 0 (C:)</text>
<text x="1038" y="236" textLength="16" lengthAdjust="spacingAndGlyphs">9%</text>
<text x="1037" y="280" style="font-size:15.5px" textLength="58" lengthAdjust="spacingAndGlyphs">Ethernet</text>
<text x="1038" y="296" class="l" textLength="78" lengthAdjust="spacingAndGlyphs">Not connected</text>
<text x="1037" y="340" style="font-size:15.5px" textLength="36" lengthAdjust="spacingAndGlyphs">Wi-Fi</text>
<text x="1038" y="356" class="l" textLength="9" lengthAdjust="spacingAndGlyphs">S:</text><text x="1051" y="356" textLength="16" lengthAdjust="spacingAndGlyphs">8,0</text><text x="1070" y="356" class="l" textLength="10" lengthAdjust="spacingAndGlyphs">R:</text><text x="1084" y="356" textLength="50" lengthAdjust="spacingAndGlyphs">56,0 Kbps</text>
<text x="1037" y="400" style="font-size:15.5px" textLength="101" lengthAdjust="spacingAndGlyphs">Bluetooth PAN</text>
<text x="1038" y="416" class="l" textLength="78" lengthAdjust="spacingAndGlyphs">Not connected</text>
<text x="1037" y="460" style="font-size:15.5px" textLength="43" lengthAdjust="spacingAndGlyphs">GPU 0</text>
<text x="1038" y="476" textLength="115" lengthAdjust="spacingAndGlyphs">NVIDIA Quadro P3200</text>
<text x="1038" y="491" textLength="16" lengthAdjust="spacingAndGlyphs">0%</text>
</g>

<!-- CPU header -->
<text x="1190" y="112" style="font-size:29px" textLength="50" lengthAdjust="spacingAndGlyphs">CPU</text>
<text x="1598" y="112" style="font-size:15.5px" textLength="296" lengthAdjust="spacingAndGlyphs">Intel(R) Xeon(R) E-2186M CPU@ 2.90GHz</text>
<text x="1191" y="135" class="l" textLength="65" lengthAdjust="spacingAndGlyphs">% Utilization</text>
<text x="1861" y="135" class="l" textLength="27" lengthAdjust="spacingAndGlyphs">100%</text>

<!-- graph -->
<path d="M1215.5 141V790M1250.5 141V790M1286.5 141V790M1321.5 141V790M1356.5 141V790M1391.5 141V790M1427.5 141V790M1462.5 141V790M1497.5 141V790M1533.5 141V790M1568.5 141V790M1604.5 141V790M1639.5 141V790M1674.5 141V790M1709.5 141V790M1745.5 141V790M1780.5 141V790M1815.5 141V790M1851.5 141V790M1191 205.5H1882M1191 270.5H1882M1191 335.5H1882M1191 400.5H1882M1191 465.5H1882M1191 530.5H1882M1191 595.5H1882M1191 660.5H1882M1191 725.5H1882" fill="none" stroke="#d9eaf4"/>
<g transform="translate(1180,560) scale(.4477,.3333)">
<path fill="#f1f6fa" fill-opacity=".85" stroke="#117dbb" stroke-width="1" vector-effect="non-scaling-stroke" d="M26 690L52 156L79 540L104 585L130 652L157 538L184 607L210 641L236 655L262 625L289 649L316 649L342 652L367 620L394 410L421 545L445 664L472 658L500 652L526 644L552 515L578 649L605 640L631 626L657 530L683 544L709 528L737 441L763 433L789 448L815 433L841 449L868 451L894 444L921 389L947 445L974 442L1000 433L1026 448L1052 439L1078 454L1105 441L1131 433L1158 454L1183 439L1210 448L1237 442L1263 448L1288 439L1315 448L1341 445L1368 448L1394 445L1419 334L1447 437L1473 631L1500 593L1525 661L1552 637L1578 662V690Z"/>
</g>
<path d="M1882 140.5H1191.5V790H1882" fill="none" stroke="#117dbb" stroke-width="1.2"/>
<text x="1191" y="804" class="l" textLength="56" lengthAdjust="spacingAndGlyphs">60 seconds</text>

<!-- stats -->
<g>
<text x="1191" y="828" class="l" textLength="53" lengthAdjust="spacingAndGlyphs">Utilization</text>
<text x="1264" y="828" class="l" textLength="31" lengthAdjust="spacingAndGlyphs">Speed</text>
<text x="1192" y="854" style="font-size:20px" textLength="26" lengthAdjust="spacingAndGlyphs">1%</text>
<text x="1264" y="854" style="font-size:20px" textLength="79" lengthAdjust="spacingAndGlyphs">0,99 GHz</text>
<text x="1191" y="879" class="l" textLength="52" lengthAdjust="spacingAndGlyphs">Processes</text>
<text x="1263" y="879" class="l" textLength="41" lengthAdjust="spacingAndGlyphs">Threads</text>
<text x="1326" y="879" class="l" textLength="43" lengthAdjust="spacingAndGlyphs">Handles</text>
<text x="1191" y="905" style="font-size:20px" textLength="33" lengthAdjust="spacingAndGlyphs">230</text>
<text x="1263" y="905" style="font-size:20px" textLength="43" lengthAdjust="spacingAndGlyphs">3779</text>
<text x="1327" y="905" style="font-size:20px" textLength="64" lengthAdjust="spacingAndGlyphs">109865</text>
<text x="1191" y="930" class="l" textLength="42" lengthAdjust="spacingAndGlyphs">Up time</text>
<text x="1191" y="956" style="font-size:20px" textLength="88" lengthAdjust="spacingAndGlyphs">0:04:59:56</text>
<text x="1404" y="828" class="l" textLength="61" lengthAdjust="spacingAndGlyphs">Base speed:</text><text x="1518" y="828" textLength="46" lengthAdjust="spacingAndGlyphs">2,90 GHz</text>
<text x="1404" y="846" class="l" textLength="42" lengthAdjust="spacingAndGlyphs">Sockets:</text><text x="1518" y="846">1</text>
<text x="1404" y="864" class="l" textLength="33" lengthAdjust="spacingAndGlyphs">Cores:</text><text x="1518" y="864">6</text>
<text x="1404" y="882" class="l" textLength="99" lengthAdjust="spacingAndGlyphs">Logical processors:</text><text x="1518" y="882" textLength="12" lengthAdjust="spacingAndGlyphs">12</text>
<text x="1404" y="900" class="l" textLength="72" lengthAdjust="spacingAndGlyphs">Virtualization:</text><text x="1518" y="900" textLength="42" lengthAdjust="spacingAndGlyphs">Enabled</text>
<text x="1404" y="918" class="l" textLength="49" lengthAdjust="spacingAndGlyphs">L1 cache:</text><text x="1518" y="918" textLength="35" lengthAdjust="spacingAndGlyphs">384 KB</text>
<text x="1404" y="936" class="l" textLength="49" lengthAdjust="spacingAndGlyphs">L2 cache:</text><text x="1518" y="936" textLength="35" lengthAdjust="spacingAndGlyphs">1,5 MB</text>
<text x="1404" y="954" class="l" textLength="49" lengthAdjust="spacingAndGlyphs">L3 cache:</text><text x="1518" y="954" textLength="42" lengthAdjust="spacingAndGlyphs">12,0 MB</text>
</g>

<!-- footer -->
<circle cx="970" cy="1005" r="8.5" fill="#fff" stroke="#999"/><path d="M966 1007L970 1002.5L974 1007" fill="none" stroke="#888"/>
<text x="987" y="1009" textLength="68" lengthAdjust="spacingAndGlyphs">Fewer details</text>
<rect x="1063" y="997" width="1" height="16" fill="#ccc"/>
<circle cx="1079.5" cy="1005" r="7.5" fill="#eee" stroke="#777" stroke-width="1.4"/><path d="M1076 1000L1083 1010" stroke="#c8281e" stroke-width="2"/>
<text x="1093" y="1009" style="fill:#0066cc" textLength="126" lengthAdjust="spacingAndGlyphs">Open Resource Monitor</text>
</svg>
</body></html>
